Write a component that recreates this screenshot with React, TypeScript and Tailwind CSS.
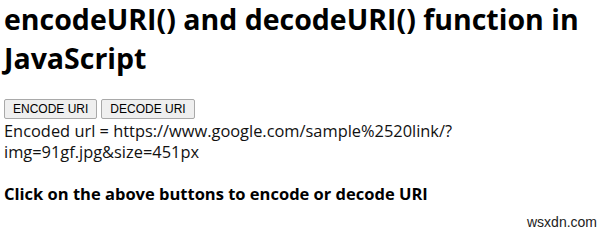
export default function App() {
  const font = { fontFamily: '"Open Sans", "Noto Sans", sans-serif' } as const;

  return (
    <div className="relative w-[600px] h-[232px] bg-white overflow-hidden text-black" style={font}>
      <div className="px-[4px] pt-[0px]">
        <h1 className="text-[28.5px] font-bold leading-[39px]">
          encodeURI() and decodeURI() function in JavaScript
        </h1>

        <div className="flex gap-[4px] mt-[21px]">
          <button className="h-[20px] px-[8px] text-[12px] leading-none bg-[#efefef] border border-[#a9a9a9] rounded-[2px] font-['Liberation_Sans',Arial,sans-serif]">
            ENCODE URI
          </button>
          <button className="h-[20px] px-[8px] text-[12px] leading-none bg-[#efefef] border border-[#a9a9a9] rounded-[2px] font-['Liberation_Sans',Arial,sans-serif]">
            DECODE URI
          </button>
        </div>

        <p className="text-[16.4px] leading-[21px] text-[#111] mt-[1px]">
          Encoded url = https://www.google.com/sample%2520link/?
          <br />
          img=91gf.jpg&amp;size=451px
        </p>

        <h3 className="mt-[22px] text-[16.5px] font-bold leading-[20px]">
          Click on the above buttons to encode or decode URI
        </h3>
      </div>

      <span className="absolute left-[527px] top-[212px] text-[14px] text-[#222] font-['Liberation_Sans',Arial,sans-serif]">
        wsxdn.com
      </span>
    </div>
  );
}
